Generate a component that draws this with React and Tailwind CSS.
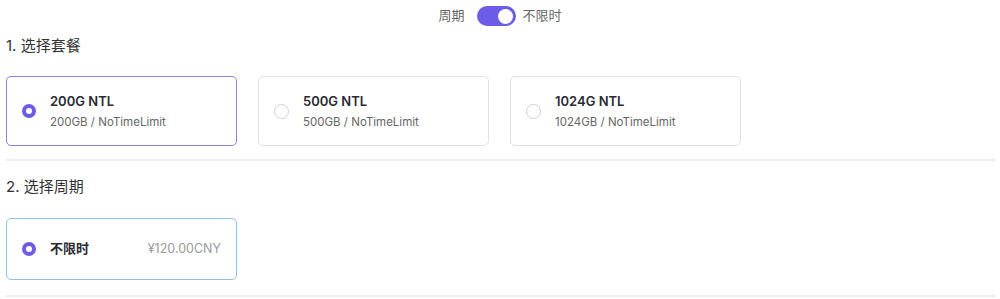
import React from "react";

const font = { fontFamily: 'Inter, "Noto Sans CJK SC", "Noto Sans", sans-serif' };

function Radio({ checked }) {
  return checked ? (
    <span className="flex h-[14px] w-[14px] shrink-0 items-center justify-center rounded-full bg-[#6c5ce7]">
      <span className="h-[6px] w-[6px] rounded-full bg-white" />
    </span>
  ) : (
    <span className="h-[15px] w-[15px] shrink-0 rounded-full border border-[#cfcfcf] bg-white" />
  );
}

function PlanCard({ title, sub, checked }) {
  return (
    <div
      className={`flex h-[70px] w-[231px] items-center rounded-[5px] border bg-white pl-[15px] ${
        checked ? "border-[#8c82e3]" : "border-[#e2e2e2]"
      }`}
    >
      <Radio checked={checked} />
      <div className="ml-[14px] flex flex-col">
        <span className="text-[13px] font-semibold leading-[16px] text-[#2a2a33]">{title}</span>
        <span className="mt-[6px] text-[11.5px] leading-[14px] text-[#666]">{sub}</span>
      </div>
    </div>
  );
}

export default function App() {
  return (
    <div className="h-[299px] w-[1000px] overflow-hidden bg-white" style={font}>
      <div className="flex h-[31px] items-center justify-center pt-[1px]">
        <span className="text-[13px] text-[#666]">周期</span>
        <span className="ml-[12px] flex h-[20px] w-[39px] items-center justify-end rounded-full bg-[#6c5ce7] pr-[3px]">
          <span className="h-[15px] w-[15px] rounded-full bg-white" />
        </span>
        <span className="ml-[7px] text-[13px] text-[#666]">不限时</span>
      </div>
      <div className="pl-[6px] pr-[6px]">
        <div className="pt-[3px] text-[15px] leading-[24px] text-[#333]">1. 选择套餐</div>
        <div className="mt-[18px] flex gap-[21px]">
          <PlanCard title="200G NTL" sub="200GB / NoTimeLimit" checked />
          <PlanCard title="500G NTL" sub="500GB / NoTimeLimit" />
          <PlanCard title="1024G NTL" sub="1024GB / NoTimeLimit" />
        </div>
        <div className="mt-[13px] h-[2px] w-[989px] bg-[#ededed]" />
        <div className="mt-[14px] text-[15px] leading-[24px] text-[#333]">2. 选择周期</div>
        <div className="mt-[19px] flex h-[62px] w-[231px] items-center rounded-[5px] border border-[#8ec3e6] bg-white pl-[15px] pr-[15px]">
          <Radio checked />
          <span className="ml-[14px] text-[13px] font-semibold text-[#2a2a33]">不限时</span>
          <span className="ml-auto text-[12.5px] text-[#9a9a9a]">¥120.00CNY</span>
        </div>
        <div className="mt-[15px] h-[2px] w-[989px] bg-[#ededed]" />
      </div>
    </div>
  );
}
